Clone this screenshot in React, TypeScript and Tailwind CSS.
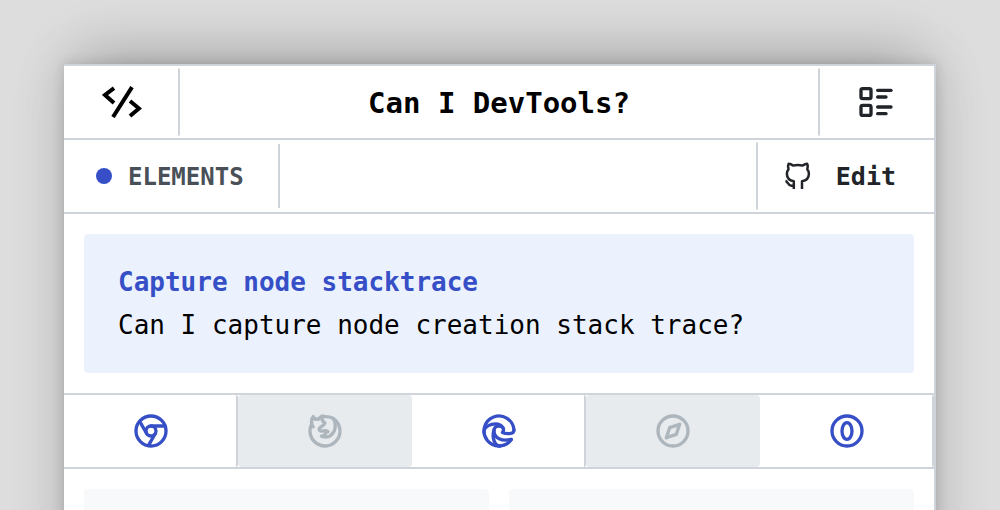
import type { ReactNode } from "react";
import {
  TbBrandChrome,
  TbBrandEdge,
  TbBrandFirefox,
  TbBrandOpera,
  TbBrandSafari,
  TbListDetails,
} from "react-icons/tb";

const browsers: { name: string; supported: boolean; icon: ReactNode }[] = [
  { name: "Chrome", supported: true, icon: <TbBrandChrome /> },
  { name: "Firefox", supported: false, icon: <TbBrandFirefox /> },
  { name: "Edge", supported: true, icon: <TbBrandEdge /> },
  { name: "Safari", supported: false, icon: <TbBrandSafari /> },
  { name: "Opera", supported: true, icon: <TbBrandOpera /> },
];

function Logo() {
  return (
    <svg viewBox="0 0 40 32" className="h-8 w-10" fill="none" stroke="currentColor" strokeWidth="4">
      <path d="M12 2.200 3 9l9 8M30 1.200 11 31M28 15l9 7.500-9 7.500" />
    </svg>
  );
}

function Octocat() {
  return (
    <svg viewBox="0 0 28 28" className="size-7" fill="none" stroke="currentColor" strokeWidth="2.500" strokeLinejoin="round">
      <path d="M9.800 27V19.300C5.400 18.600 2.900 16 2.900 11.800c0-2 .6-3.400 1.600-4.500C3.800 5.500 4 3 4.600 1.800c1.600 0 3.200.8 4.500 1.800 2.800-.7 6.800-.7 9.600 0 1.300-1 2.900-1.800 4.500-1.800.6 1.200.8 3.700.1 5.500 1 1.100 1.600 2.500 1.600 4.500 0 4.200-2.500 6.800-6.900 7.500V27" />
      <path d="M1.500 18.700c2.300.6 2.300 4.900 5.900 5.100h2.400" />
    </svg>
  );
}

function Header() {
  return (
    <header className="flex h-[74px] items-stretch border-b-2 border-[#ced4da]">
      <a href="#home" aria-label="Home" className="my-0.5 flex w-29 items-center justify-center rounded-xs border-r-2 border-[#ced4da] pl-0.5">
        <Logo />
      </a>
      <h1 className="flex flex-1 items-center justify-center pt-1 text-[29px] font-bold">Can I DevTools?</h1>
      <button aria-label="Feature list" className="my-0.5 flex w-29 items-center justify-center rounded-xs border-l-2 border-[#ced4da] pr-0.5 text-[40px] text-[#212529]">
        <TbListDetails />
      </button>
    </header>
  );
}

function Toolbar() {
  return (
    <div className="flex h-[74px] items-stretch justify-between border-b-2 border-[#ced4da]">
      <div className="my-1 flex items-center gap-4 border-r-2 border-[#ced4da] pr-[34px] pl-8 text-2xl font-bold text-[#495057]">
        <span className="size-4 rounded-full bg-[#364fc7]" />
        <span className="pt-0.5">ELEMENTS</span>
      </div>
      <a href="#edit" className="my-0.5 flex items-center gap-6 rounded-xs border-l-2 border-[#ced4da] pr-[38px] pl-[26px] text-[25px] font-bold text-[#212529]">
        <Octocat />
        <span className="pt-0.5">Edit</span>
      </a>
    </div>
  );
}

export default function App() {
  return (
    <div className="h-screen overflow-hidden bg-[#dddddd] px-16 pt-16 font-['DejaVu_Sans_Mono',monospace] text-black">
      <main className="min-h-full border-t-2 border-r-2 border-[#ced4da] bg-white shadow-[0_0_12px_rgba(0,0,0,0.14),0_0_60px_rgba(0,0,0,0.08),0_-24px_56px_-16px_rgba(0,0,0,0.24)]">
        <Header />
        <Toolbar />
        <section className="p-5">
          <div className="rounded-sm bg-[#ebf2fe] px-[34px] pt-[27px] pb-[26px] text-[26px] leading-[43px]">
            <h2 className="font-bold text-[#364fc7]">Capture node stacktrace</h2>
            <p>Can I capture node creation stack trace?</p>
          </div>
        </section>
        <ul className="grid h-[76px] grid-cols-5 border-y-2 border-[#ced4da]">
          {browsers.map(({ name, supported, icon }) => (
            <li
              key={name}
              aria-label={name}
              className={
                supported
                  ? "flex items-center justify-center rounded-xs border-r-2 border-[#ced4da] pl-0.5 text-[40px] text-[#364fc7]"
                  : "flex items-center justify-center rounded-sm bg-[#e7ebee] text-[40px] text-[#adb5bd]"
              }
            >
              {icon}
            </li>
          ))}
        </ul>
        <section className="grid grid-cols-2 gap-5 p-5">
          <div className="h-40 rounded-sm bg-[#f8f9fa]" />
          <div className="h-40 rounded-sm bg-[#f8f9fa]" />
        </section>
      </main>
    </div>
  );
}
